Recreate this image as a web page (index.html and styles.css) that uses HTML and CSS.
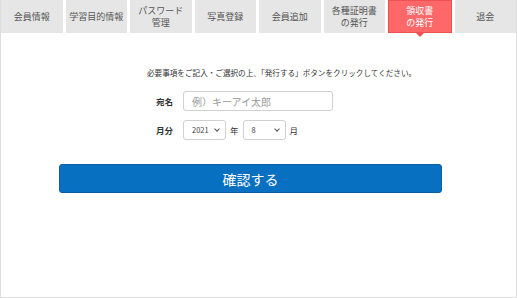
FILE: index.html
```html
<!DOCTYPE html>
<html>
<head>
  <meta charset="utf-8">
  <title>領収書の発行</title>
  <link rel="stylesheet" href="styles.css">
</head>
<body>
  <div class="page">
    <ul class="tabs">
      <li class="tab">会員情報</li>
      <li class="tab">学習目的情報</li>
      <li class="tab">パスワード<br>管理</li>
      <li class="tab">写真登録</li>
      <li class="tab">会員追加</li>
      <li class="tab">各種証明書<br>の発行</li>
      <li class="tab tab-active">領収書<br>の発行</li>
      <li class="tab">退会</li>
    </ul>

    <form class="form">
      <p class="lead">必要事項をご記入・ご選択の上、「発行する」ボタンをクリックしてください。</p>
      <div class="row">
        <label class="label" for="atena">宛名</label>
        <input class="text-input" id="atena" type="text" placeholder="例）キーアイ太郎">
      </div>
      <div class="row row-month">
        <span class="label">月分</span>
        <span class="select">2021</span>
        <span class="unit">年</span>
        <span class="select">8</span>
        <span class="unit">月</span>
      </div>
      <button class="submit-btn" type="button">確認する</button>
    </form>
  </div>
</body>
</html>
```

FILE: styles.css
```css
body {
  margin: 0;
  font-family: "Noto Sans CJK JP", "Noto Sans", sans-serif;
  color: #333;
}

.page {
  width: 517px;
  height: 298px;
  box-sizing: border-box;
  border: 1px solid #dedede;
  border-top: none;
  background: #fff;
}

.tabs {
  display: flex;
  gap: 3px;
  margin: 0;
  padding: 0;
  list-style: none;
  height: 33px;
}

.tab {
  position: relative;
  flex: 1;
  display: flex;
  align-items: center;
  justify-content: center;
  text-align: center;
  background: #e6e6e6;
  color: #555;
  font-size: 9px;
  line-height: 12px;
}

.tab-active {
  background: #ff6868;
  border: 1px solid #ee5252;
  color: #fff;
  box-sizing: border-box;
}

.tab-active::after {
  content: "";
  position: absolute;
  left: 50%;
  bottom: -5px;
  margin-left: -5px;
  border-left: 5px solid transparent;
  border-right: 5px solid transparent;
  border-top: 5px solid #ee5252;
}

.lead {
  margin: 34px 0 0 146px;
  font-size: 7.6px;
  line-height: 12px;
  color: #333;
}

.row {
  display: flex;
  align-items: center;
  margin: 12px 0 0 155px;
}

.row-month {
  margin-top: 9px;
}

.label {
  width: 27px;
  font-size: 8.5px;
  font-weight: bold;
  color: #333;
}

.text-input {
  width: 150px;
  height: 20px;
  box-sizing: border-box;
  padding: 0 8px;
  border: 1px solid #d0d0d0;
  border-radius: 3px;
  font-family: inherit;
  font-size: 10px;
}

.text-input::placeholder {
  color: #999;
}

.select {
  position: relative;
  width: 43px;
  height: 20px;
  box-sizing: border-box;
  padding-left: 8px;
  border: 1px solid #d0d0d0;
  border-radius: 3px;
  font-size: 7.5px;
  line-height: 18px;
  color: #444;
}

.select::after {
  content: "";
  position: absolute;
  right: 6px;
  top: 6px;
  width: 3px;
  height: 3px;
  border-right: 1px solid #555;
  border-bottom: 1px solid #555;
  transform: rotate(45deg);
}

.unit {
  margin: 0 4px;
  font-size: 8.5px;
  color: #333;
}

.submit-btn {
  display: block;
  width: 383px;
  height: 29px;
  margin: 24px 0 0 58px;
  border: 1px solid #0a5fa3;
  border-radius: 3px;
  background: #0870c0;
  color: #fff;
  font-family: inherit;
  font-size: 14px;
}
```
